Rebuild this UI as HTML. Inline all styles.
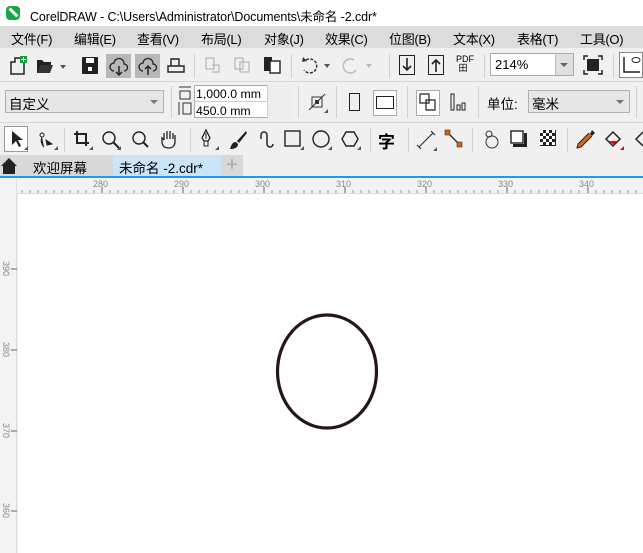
<!DOCTYPE html><html><head><meta charset="utf-8"><style>
*{margin:0;padding:0;box-sizing:border-box}
body{width:643px;height:553px;overflow:hidden;background:#f0f0f0;font-family:"Liberation Sans","Noto Sans CJK SC",sans-serif;font-size:13px;color:#000;position:relative}
.a{position:absolute}
.menu span{position:absolute;top:3px;font-size:13px;letter-spacing:-0.3px}
.sep{position:absolute;width:1px;background:#d0d0d0}
.hl{position:absolute;height:1px;background:#d8d8d8;left:0;width:643px}
svg{position:absolute;overflow:visible}
</style></head><body>
<div class="a" style="left:0;top:0;width:643px;height:26px;background:#fff"></div>
<div class="a" style="left:6px;top:6px;width:14px;height:14px;border-radius:4px;background:#1aa640"><div style="position:absolute;left:2px;top:5px;width:11px;height:3px;background:#fff;transform:rotate(45deg)"></div></div>
<div class="a" style="left:30px;top:6px;font-size:12.5px;letter-spacing:-0.1px">CorelDRAW - C:\Users\Administrator\Documents\未命名 -2.cdr*</div>
<div class="a menu" style="left:0;top:26px;width:643px;height:22px;background:#dcdcdc">
<span style="left:11px">文件(F)</span><span style="left:74px">编辑(E)</span><span style="left:137px">查看(V)</span><span style="left:201px">布局(L)</span><span style="left:264px">对象(J)</span><span style="left:325px">效果(C)</span><span style="left:389px">位图(B)</span><span style="left:453px">文本(X)</span><span style="left:517px">表格(T)</span><span style="left:580px">工具(O)</span></div>
<div class="hl" style="top:81px"></div><div class="hl" style="top:122px"></div>
<svg style="left:8px;top:56px" width="20" height="20"><path d="M3 6h4V2h9v16H3z" fill="none" stroke="#222" stroke-width="1.5"/><rect x="12" y="0" width="7" height="7" fill="#1a9c3a"/><path d="M15.5 1v5M13 3.5h5" stroke="#fff"/></svg>
<svg style="left:36px;top:57px" width="30" height="18"><path d="M1 16V3h5l2 2h7v3H5L2 16z" fill="#222"/><path d="M2 16l3-8h12l-3 8z" fill="#333"/><path d="M24 8h6l-3 4z" fill="#555"/></svg>
<svg style="left:82px;top:57px" width="16" height="17"><rect width="16" height="17" rx="1" fill="#222"/><rect x="4" y="1" width="8" height="5" fill="#fff"/><rect x="6" y="10" width="4" height="4" fill="#fff"/></svg>
<div class="a" style="left:106px;top:54px;width:25px;height:24px;background:#b8b8b8"></div>
<div class="a" style="left:135px;top:54px;width:25px;height:24px;background:#b8b8b8"></div>
<svg style="left:110px;top:58px" width="18" height="18"><path d="M4 13a4 4 0 0 1 0-8a5 5 0 0 1 10 1a3.5 3.5 0 0 1 0 7" fill="none" stroke="#222" stroke-width="1.3"/><path d="M9 8v9M6 14l3 3 3-3" fill="none" stroke="#222" stroke-width="1.5"/></svg>
<svg style="left:139px;top:58px" width="18" height="18"><path d="M4 13a4 4 0 0 1 0-8a5 5 0 0 1 10 1a3.5 3.5 0 0 1 0 7" fill="none" stroke="#222" stroke-width="1.3"/><path d="M9 17V8M6 11l3-3 3 3" fill="none" stroke="#222" stroke-width="1.5"/></svg>
<svg style="left:167px;top:57px" width="18" height="17"><path d="M4 9V2h8v7M1 9h16v6H1z" fill="none" stroke="#222" stroke-width="1.4"/></svg>
<div class="sep" style="left:194px;top:54px;height:24px"></div>
<svg style="left:205px;top:57px" width="16" height="16"><path d="M1 1h8v11H1zM7 8h7v7H7" fill="none" stroke="#aaa"/></svg>
<svg style="left:234px;top:57px" width="16" height="16"><path d="M1 1h8v11H1zM6 5h9v10H6z" fill="none" stroke="#aaa"/></svg>
<svg style="left:263px;top:56px" width="18" height="18"><rect x="1" y="1" width="8" height="14" fill="#222"/><rect x="7" y="5" width="10" height="12" fill="#fff" stroke="#222" stroke-width="1.4"/></svg>
<div class="sep" style="left:291px;top:54px;height:24px"></div>
<svg style="left:300px;top:56px" width="34" height="20"><path d="M6 4a7 7 0 1 1-2 10" fill="none" stroke="#333" stroke-width="1.5" stroke-dasharray="3 1.5"/><path d="M3 1l4 4-5 1z" fill="#333"/><path d="M24 8h6l-3 4z" fill="#555"/></svg>
<svg style="left:342px;top:56px" width="34" height="20"><path d="M12 4a7 7 0 1 0 2 10" fill="none" stroke="#bbb" stroke-width="1.5"/><path d="M24 8h6l-3 4z" fill="#bbb"/></svg>
<div class="sep" style="left:389px;top:54px;height:24px"></div>
<svg style="left:399px;top:55px" width="16" height="20"><rect x="0.5" y="0.5" width="15" height="19" fill="none" stroke="#222"/><path d="M8 3v12M4 11l4 4 4-4" fill="none" stroke="#222" stroke-width="1.6"/></svg>
<svg style="left:428px;top:55px" width="16" height="20"><rect x="0.5" y="0.5" width="15" height="19" fill="none" stroke="#222"/><path d="M8 17V5M4 9l4-4 4 4" fill="none" stroke="#222" stroke-width="1.6"/></svg>
<div class="a" style="left:456px;top:55px;font-size:9px;line-height:9px">PDF<br>&nbsp;田</div>
<div class="sep" style="left:484px;top:54px;height:24px"></div>
<div class="a" style="left:490px;top:53px;width:84px;height:23px;background:#fff;border:1px solid #aaa"><span style="position:absolute;left:4px;top:3px">214%</span><div style="position:absolute;right:0;top:0;width:18px;height:21px;background:#e0e0e0;border-left:1px solid #bbb"></div><div style="position:absolute;right:5px;top:9px;border:4px solid transparent;border-top:4px solid #666"></div></div>
<svg style="left:584px;top:56px" width="18" height="18"><rect x="3" y="3" width="12" height="12" fill="#222"/><path d="M0 4V0h4M14 0h4v4M18 14v4h-4M4 18H0v-4" fill="none" stroke="#222" stroke-width="1.5"/></svg>
<div class="sep" style="left:613px;top:54px;height:24px"></div>
<div class="a" style="left:619px;top:52px;width:24px;height:26px;background:#fff;border:1px solid #888"></div>
<svg style="left:622px;top:55px" width="20" height="20"><path d="M2 2v15h16" fill="none" stroke="#222" stroke-width="1.5"/><ellipse cx="14" cy="5" rx="4" ry="2.5" fill="none" stroke="#222"/></svg>
<div class="a" style="left:5px;top:90px;width:159px;height:23px;background:#e6e6e6;border:1px solid #b0b0b0"><span style="position:absolute;left:3px;top:2px;font-size:13.5px">自定义</span><div style="position:absolute;right:5px;top:9px;border:4px solid transparent;border-top:4px solid #777"></div></div>
<div class="sep" style="left:171px;top:86px;height:32px"></div>
<svg style="left:178px;top:86px" width="14" height="30"><path d="M1 1h12M2 5h10v8H2zM1 16v13M5 17h8v11H5z" fill="none" stroke="#333"/></svg>
<div class="a" style="left:194px;top:85px;width:97px;height:33px;background:#fff;border:1px solid #aaa"></div>
<div class="a" style="left:196px;top:87px;font-size:12.3px">1,000.0 mm</div>
<div class="a" style="left:196px;top:104px;font-size:12.3px">450.0 mm</div>
<div class="a" style="left:194px;top:101px;width:97px;height:1px;background:#ccc"></div>
<div class="a" style="left:267px;top:85px;width:24px;height:33px;background:#eee;border-left:1px solid #ccc"></div>
<div class="sep" style="left:298px;top:86px;height:32px"></div>
<svg style="left:308px;top:93px" width="20" height="20"><rect x="4" y="4" width="10" height="10" fill="none" stroke="#333"/><rect x="7" y="7" width="4" height="4" fill="#333"/><path d="M1 17L17 1" stroke="#333"/><path d="M20 20h-4l4-4z" fill="#555"/></svg>
<div class="sep" style="left:336px;top:86px;height:32px"></div>
<div class="a" style="left:349px;top:93px;width:11px;height:18px;border:1.3px solid #222"></div>
<div class="a" style="left:373px;top:90px;width:24px;height:26px;background:#fff;border:1px solid #aaa"></div>
<div class="a" style="left:376px;top:96px;width:18px;height:13px;border:1.3px solid #222"></div>
<div class="sep" style="left:407px;top:86px;height:32px"></div>
<div class="a" style="left:416px;top:90px;width:24px;height:26px;background:#fff;border:1px solid #aaa"></div>
<svg style="left:419px;top:93px" width="18" height="20"><path d="M1 1h9v9H1zM7 7h9v10H7z" fill="none" stroke="#222" stroke-width="1.2"/></svg>
<svg style="left:450px;top:93px" width="16" height="18"><path d="M1 1v16h3V1zM7 12h3v5H7zM12 10h3v7h-3z" fill="none" stroke="#222"/></svg>
<div class="sep" style="left:478px;top:86px;height:32px"></div>
<div class="a" style="left:487px;top:93px;font-size:13.5px">单位:</div>
<div class="a" style="left:528px;top:90px;width:102px;height:23px;background:#e6e6e6;border:1px solid #b0b0b0"><span style="position:absolute;left:3px;top:2px;font-size:13.5px">毫米</span><div style="position:absolute;right:5px;top:9px;border:4px solid transparent;border-top:4px solid #777"></div></div>
<div class="sep" style="left:636px;top:86px;height:32px"></div>
<div class="a" style="left:4px;top:126px;width:24px;height:26px;background:#fff;border:1px solid #999"></div>
<svg style="left:10px;top:130px" width="18" height="20"><path d="M2 1v14l4-4 3 6 2-1-3-6h5z" fill="#222"/><path d="M18 20h-4l4-4z" fill="#555"/></svg>
<svg style="left:38px;top:130px" width="20" height="20"><circle cx="4" cy="5" r="2" fill="none" stroke="#222"/><path d="M4 7c-2 4 0 8 2 10M8 10l6 4-5 1z" fill="#222" stroke="#222"/><path d="M20 20h-4l4-4z" fill="#555"/></svg>
<div class="sep" style="left:64px;top:128px;height:24px"></div>
<svg style="left:73px;top:130px" width="20" height="20"><path d="M4 1v12h12M1 4h12v12" fill="none" stroke="#222" stroke-width="2"/><path d="M20 20h-4l4-4z" fill="#555"/></svg>
<svg style="left:101px;top:130px" width="20" height="20"><circle cx="8" cy="8" r="6" fill="none" stroke="#222" stroke-width="1.4"/><path d="M12 12l6 6" stroke="#222" stroke-width="2"/><path d="M20 20h-4l4-4z" fill="#555"/></svg>
<svg style="left:131px;top:130px" width="18" height="20"><circle cx="8" cy="8" r="6" fill="none" stroke="#222" stroke-width="1.4"/><path d="M12 12l5 5" stroke="#222" stroke-width="2"/></svg>
<svg style="left:160px;top:129px" width="18" height="20"><path d="M4 11V4M7 10V2M10 10V2M13 10V4M4 11l-2-2v4c0 4 3 6 7 6s6-3 6-6V6" fill="none" stroke="#222" stroke-width="1.3"/></svg>
<div class="sep" style="left:190px;top:128px;height:24px"></div>
<svg style="left:199px;top:129px" width="20" height="21"><path d="M7 1l4 8-2 3H5L3 9z" fill="none" stroke="#222" stroke-width="1.3"/><path d="M7 4v6M5 12v5h4v-5" fill="none" stroke="#222"/><path d="M20 21h-4l4-4z" fill="#555"/></svg>
<svg style="left:228px;top:130px" width="20" height="20"><path d="M18 1L9 11l2 2L19 3z" fill="#222"/><path d="M8 12c-4 0-5 4-6 7 4 0 8-1 8-5z" fill="#222"/></svg>
<svg style="left:256px;top:129px" width="20" height="21"><path d="M5 6a3 3 0 0 1 6 0v9a3 3 0 0 0 6 0" fill="none" stroke="#222" stroke-width="1.5"/><path d="M5 6v4" stroke="#222" stroke-width="1.5"/></svg>
<svg style="left:284px;top:130px" width="20" height="20"><rect x="1" y="1" width="15" height="15" fill="none" stroke="#222" stroke-width="1.4"/><path d="M20 20h-4l4-4z" fill="#555"/></svg>
<svg style="left:312px;top:130px" width="20" height="20"><circle cx="9" cy="9" r="8" fill="none" stroke="#222" stroke-width="1.4"/><path d="M20 20h-4l4-4z" fill="#555"/></svg>
<svg style="left:341px;top:130px" width="20" height="20"><path d="M5 2h8l4 7-4 7H5L1 9z" fill="none" stroke="#222" stroke-width="1.4"/><path d="M20 20h-4l4-4z" fill="#555"/></svg>
<div class="sep" style="left:370px;top:128px;height:24px"></div>
<div class="a" style="left:378px;top:128px;font-size:17px;font-weight:bold">字</div>
<div class="sep" style="left:408px;top:128px;height:24px"></div>
<svg style="left:417px;top:131px" width="20" height="20"><path d="M2 16L16 2M0 14l4 4M14 0l4 4" stroke="#333" stroke-width="1.2"/><path d="M20 20h-4l4-4z" fill="#555"/></svg>
<svg style="left:445px;top:130px" width="20" height="20"><path d="M3 3l12 12" stroke="#333" stroke-width="1.5"/><rect x="0" y="0" width="5" height="5" fill="#e85a0c" stroke="#333" stroke-width=".6"/><rect x="12" y="12" width="5" height="5" fill="#e85a0c" stroke="#333" stroke-width=".6"/></svg>
<div class="sep" style="left:472px;top:128px;height:24px"></div>
<svg style="left:482px;top:129px" width="20" height="21"><circle cx="7" cy="5" r="3" fill="none" stroke="#333"/><circle cx="10" cy="13" r="6" fill="none" stroke="#333"/></svg>
<svg style="left:510px;top:130px" width="18" height="18"><rect x="1" y="1" width="12" height="12" fill="#fff" stroke="#222" stroke-width="1.4"/><path d="M14 3v11H3v3h14V3z" fill="#222"/></svg>
<svg style="left:540px;top:130px" width="16" height="16"><rect width="16" height="16" fill="#222"/><path d="M0 0h3v3H0zM6 0h3v3H6zM12 0h3v3h-3zM3 3h3v3H3zM9 3h3v3H9zM0 6h3v3H0zM6 6h3v3H6zM12 6h3v3h-3zM3 9h3v3H3zM9 9h3v3H9zM0 12h3v3H0zM6 12h3v3H6zM12 12h3v3h-3z" fill="#fff"/></svg>
<div class="sep" style="left:567px;top:128px;height:24px"></div>
<svg style="left:576px;top:129px" width="20" height="21"><path d="M16 1l3 3-3 3-2-2z" fill="#222"/><path d="M13 4l-11 11-1 4 4-1 11-11" fill="#d2691e" stroke="#222"/></svg>
<svg style="left:604px;top:130px" width="20" height="20"><path d="M2 9l7-7 7 7-7 7z" fill="none" stroke="#222" stroke-width="1.5"/><path d="M5 11h9l-4 4z" fill="#e00"/><path d="M20 20h-4l4-4z" fill="#e00"/></svg>
<svg style="left:634px;top:130px" width="10" height="20"><path d="M9 2L2 9l7 7" fill="none" stroke="#222" stroke-width="1.5"/></svg>
<div class="a" style="left:0;top:155px;width:643px;height:21px;background:#f0f0f0"></div>
<div class="a" style="left:0;top:155px;width:113px;height:21px;background:#d8d8d8"></div>
<svg style="left:1px;top:158px" width="16" height="16"><path d="M0 8L8 0l8 8h-2v8H2V8z" fill="#222"/></svg>
<div class="a" style="left:33px;top:157px;font-size:13.5px">欢迎屏幕</div>
<div class="a" style="left:113px;top:155px;width:108px;height:21px;background:#cce4f7"></div>
<div class="a" style="left:119px;top:157px;font-size:13.5px">未命名 -2.cdr*</div>
<div class="a" style="left:221px;top:155px;width:22px;height:21px;background:#d8d8d8;color:#aaa;font-size:20px;line-height:20px;text-align:center">+</div>
<div class="a" style="left:0;top:176px;width:643px;height:2px;background:#1e9be8"></div>
<div class="a" style="left:0;top:178px;width:643px;height:16px;background:#f3f3f3"></div>
<div class="a" style="left:0;top:178px;width:17px;height:375px;background:#f3f3f3;border-right:1px solid #ddd"></div>
<div class="a" style="left:17px;top:193px;width:626px;height:1px;background:#ddd"></div>
<div class="a" style="left:18px;top:194px;width:625px;height:359px;background:#fff"></div>
<svg style="left:0;top:0" width="643" height="553">
<g font-family="Liberation Sans" font-size="9" fill="#888">
<text x="93" y="187">280</text><text x="174" y="187">290</text><text x="255" y="187">300</text><text x="336" y="187">310</text><text x="417" y="187">320</text><text x="498" y="187">330</text><text x="579" y="187">340</text>
<text transform="translate(3,261) rotate(90)">390</text><text transform="translate(3,342) rotate(90)">380</text><text transform="translate(3,423) rotate(90)">370</text><text transform="translate(3,503) rotate(90)">360</text>
</g>
<g stroke="#666">
<path d="M102 187v6M183 187v6M264 187v6M345 187v6M426 187v6M507 187v6M588 187v6"/>
<path d="M11 269h6M11 350h6M11 431h6M11 511h6"/>
<path d="M22 190v3M30 190v3M38 190v3M46 190v3M54 190v3M62 190v3M70 190v3M78 190v3M86 190v3M94 190v3M110 190v3M118 190v3M126 190v3M134 190v3M142 190v3M150 190v3M158 190v3M166 190v3M174 190v3M191 190v3M199 190v3M207 190v3M215 190v3M223 190v3M231 190v3M239 190v3M247 190v3M255 190v3M272 190v3M280 190v3M288 190v3M296 190v3M304 190v3M312 190v3M320 190v3M328 190v3M336 190v3M353 190v3M361 190v3M369 190v3M377 190v3M385 190v3M393 190v3M401 190v3M409 190v3M417 190v3M434 190v3M442 190v3M450 190v3M458 190v3M466 190v3M474 190v3M482 190v3M490 190v3M498 190v3M515 190v3M523 190v3M531 190v3M539 190v3M547 190v3M555 190v3M563 190v3M571 190v3M579 190v3M596 190v3M604 190v3M612 190v3M620 190v3M628 190v3M636 190v3" stroke-width="1" stroke="#999"/>
</g>
<ellipse cx="327" cy="371.5" rx="49.5" ry="56.5" fill="none" stroke="#231815" stroke-width="3.2"/>
</svg>
</body></html>
